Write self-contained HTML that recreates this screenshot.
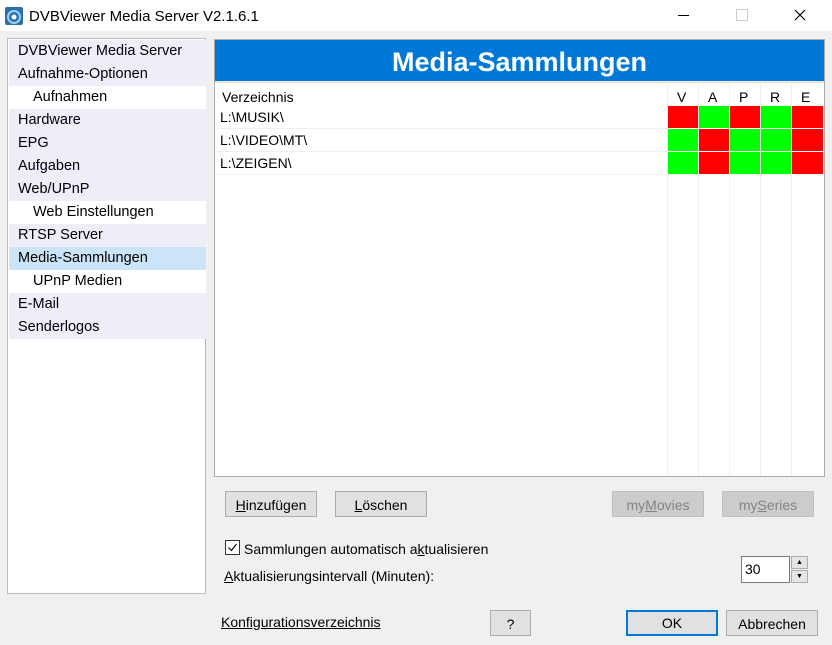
<html><head><style>
body{margin:0;width:832px;height:645px;background:#f0f0f0;font-family:"Liberation Sans",sans-serif;font-size:14px;color:#000;position:relative;overflow:hidden}
.a{position:absolute}
.t{background:#fff;height:31px;width:832px;left:0;top:0}
.btn{position:absolute;height:26px;border:1px solid #adadad;background:#e1e1e1;text-align:center;line-height:26px;box-sizing:border-box}
.dis{color:#838383;background:#cccccc;border-color:#bfbfbf}
.it{position:absolute;left:1px;width:197px;height:23px;line-height:23px;padding-left:9px;box-sizing:border-box;background:#eeeef9;font-size:14.5px}
.sub{background:#fff;padding-left:24px}
.c{position:absolute;width:30px;height:22px}
.r{background:#ff0000}.g{background:#00ff00}
u{text-decoration:underline}
</style></head><body>
<div class="a t"></div>
<svg class="a" style="left:5px;top:7px" width="18" height="18"><rect width="18" height="18" rx="2" fill="#2a6fb0"/><circle cx="9" cy="10" r="6" fill="none" stroke="#9cd0f5" stroke-width="2"/><circle cx="9" cy="10" r="2.5" fill="#fff"/></svg>
<div class="a" style="left:29px;top:8px;font-size:15px">DVBViewer Media Server V2.1.6.1</div>
<div class="a" style="left:678px;top:15px;width:11px;height:1px;background:#000"></div>
<div class="a" style="left:736px;top:9px;width:10px;height:10px;border:1px solid #ccc"></div>
<svg class="a" style="left:794px;top:9px" width="12" height="12"><path d="M1 1L11 11M11 1L1 11" stroke="#000" stroke-width="1.2"/></svg>

<div class="a" style="left:7px;top:38px;width:199px;height:556px;background:#fff;border:1px solid #bbb;box-sizing:border-box">
<div class="it" style="top:1px">DVBViewer Media Server</div>
<div class="it" style="top:24px">Aufnahme-Optionen</div>
<div class="it sub" style="top:47px">Aufnahmen</div>
<div class="it" style="top:70px">Hardware</div>
<div class="it" style="top:93px">EPG</div>
<div class="it" style="top:116px">Aufgaben</div>
<div class="it" style="top:139px">Web/UPnP</div>
<div class="it sub" style="top:162px">Web Einstellungen</div>
<div class="it" style="top:185px">RTSP Server</div>
<div class="it" style="top:208px;background:#cce4f7">Media-Sammlungen</div>
<div class="it sub" style="top:231px">UPnP Medien</div>
<div class="it" style="top:254px">E-Mail</div>
<div class="it" style="top:277px">Senderlogos</div>
</div>

<div class="a" style="left:214px;top:39px;width:611px;height:438px;border:1px solid #aaa;background:#fff;box-sizing:border-box"></div>
<div class="a" style="left:215px;top:40px;width:609px;height:41px;background:#0078d7;color:#fff;font-weight:bold;font-size:27px;text-align:center;line-height:44px">Media-Sammlungen</div>
<div class="a" style="left:215px;top:81px;width:609px;height:2px;background:#e5e5e5"></div>
<div class="a" style="left:222px;top:89px">Verzeichnis</div>
<div class="a" style="left:215px;top:128px;width:453px;height:1px;background:#f0f0f0"></div>
<div class="a" style="left:215px;top:151px;width:453px;height:1px;background:#f0f0f0"></div>
<div class="a" style="left:215px;top:174px;width:453px;height:1px;background:#f0f0f0"></div>
<div class="a" style="left:220px;top:109px">L:\MUSIK\</div>
<div class="a" style="left:220px;top:132px">L:\VIDEO\MT\</div>
<div class="a" style="left:220px;top:155px">L:\ZEIGEN\</div>
<div class="a" style="left:667px;top:84px;width:1px;height:392px;background:#f0f0f0"></div>
<div class="a" style="left:698px;top:84px;width:1px;height:392px;background:#f0f0f0"></div>
<div class="a" style="left:729px;top:84px;width:1px;height:392px;background:#f0f0f0"></div>
<div class="a" style="left:760px;top:84px;width:1px;height:392px;background:#f0f0f0"></div>
<div class="a" style="left:791px;top:84px;width:1px;height:392px;background:#f0f0f0"></div>
<div class="a" style="left:677px;top:89px">V</div><div class="a" style="left:708px;top:89px">A</div><div class="a" style="left:739px;top:89px">P</div><div class="a" style="left:770px;top:89px">R</div><div class="a" style="left:801px;top:89px">E</div>
<div class="c r" style="left:668px;top:106px"></div><div class="c g" style="left:699px;top:106px"></div><div class="c r" style="left:730px;top:106px"></div><div class="c g" style="left:761px;top:106px"></div><div class="c r" style="left:792px;top:106px;width:31px"></div>
<div class="c g" style="left:668px;top:129px"></div><div class="c r" style="left:699px;top:129px"></div><div class="c g" style="left:730px;top:129px"></div><div class="c g" style="left:761px;top:129px"></div><div class="c r" style="left:792px;top:129px;width:31px"></div>
<div class="c g" style="left:668px;top:152px"></div><div class="c r" style="left:699px;top:152px"></div><div class="c g" style="left:730px;top:152px"></div><div class="c g" style="left:761px;top:152px"></div><div class="c r" style="left:792px;top:152px;width:31px"></div>

<div class="btn" style="left:225px;top:491px;width:92px"><u>H</u>inzufügen</div>
<div class="btn" style="left:335px;top:491px;width:92px"><u>L</u>öschen</div>
<div class="btn dis" style="left:612px;top:491px;width:92px">my<u>M</u>ovies</div>
<div class="btn dis" style="left:722px;top:491px;width:92px">my<u>S</u>eries</div>

<div class="a" style="left:225px;top:540px;width:13px;height:13px;border:1px solid #333;background:#fff"><svg width="13" height="13" style="display:block"><path d="M2.5 6.5L5.5 9.5L10.5 3" fill="none" stroke="#000" stroke-width="1.2"/></svg></div>
<div class="a" style="left:244px;top:541px">Sammlungen automatisch a<u>k</u>tualisieren</div>
<div class="a" style="left:224px;top:568px"><u>A</u>ktualisierungsintervall (Minuten):</div>
<div class="a" style="left:741px;top:556px;width:49px;height:27px;border:1px solid #7a7a7a;background:#fff;box-sizing:border-box;padding:4px 3px">30</div>
<div class="a" style="left:791px;top:556px;width:17px;height:13px;border:1px solid #adadad;background:#e5e5e5;box-sizing:border-box;font-size:7px;text-align:center;line-height:11px">▲</div>
<div class="a" style="left:791px;top:570px;width:17px;height:13px;border:1px solid #adadad;background:#e5e5e5;box-sizing:border-box;font-size:7px;text-align:center;line-height:11px">▼</div>

<div class="a" style="left:221px;top:614px"><u>Konfigurationsverzeichnis</u></div>
<div class="btn" style="left:490px;top:610px;width:41px">?</div>
<div class="btn" style="left:626px;top:610px;width:92px;border:2px solid #0078d7;line-height:23px">OK</div>
<div class="btn" style="left:726px;top:610px;width:92px">Abbrechen</div>
</body></html>
